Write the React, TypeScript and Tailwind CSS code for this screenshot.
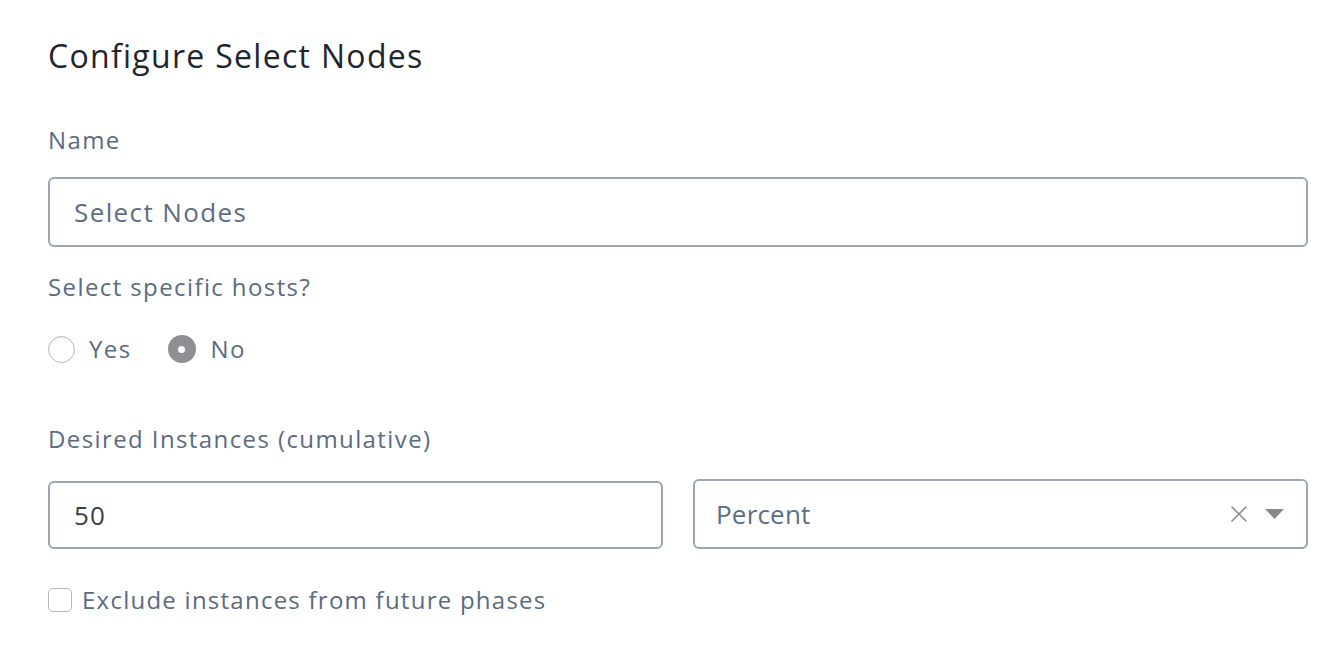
import { X } from "lucide-react";

export default function App() {
  return (
    <div className="min-h-screen bg-white font-['Open_Sans',sans-serif] text-[#5b6b80]">
      <div className="pl-12 pr-[22px] pt-[34px]">
        {/* Header */}
        <h2 className="text-[32px] leading-[44px] tracking-[1.3px] text-[#22262b]">Configure Select Nodes</h2>

        {/* Name */}
        <div className="mt-[46px] text-[24px] leading-8 tracking-[1.4px]">Name</div>
        <div className="mt-[21px] flex h-[70px] items-center rounded-md border-2 border-[#9aa6b6] px-6 text-[26px] tracking-[1.4px] text-[#5d6e83]">
          Select Nodes
        </div>

        {/* Specific hosts */}
        <div className="mt-6 text-[24px] leading-8 tracking-[1.4px]">Select specific hosts?</div>
        <div className="mt-[30px] flex items-center text-[24px] leading-8 tracking-[1.4px]">
          <label className="flex items-center gap-[14px]">
            <span className="h-[27px] w-[27px] rounded-full border border-[#b8b8bc] bg-white shadow-[inset_0_1px_2px_rgba(0,0,0,0.08)]" />
            <span>Yes</span>
          </label>
          <label className="ml-[36px] flex items-center gap-[15px]">
            <span className="flex h-[28px] w-[28px] items-center justify-center rounded-full bg-[#8e8e93]">
              <span className="h-[7px] w-[7px] rounded-full bg-white" />
            </span>
            <span>No</span>
          </label>
        </div>

        {/* Desired instances */}
        <div className="mt-[58px] text-[24px] leading-8 tracking-[1.4px]">Desired Instances (cumulative)</div>
        <div className="mt-[26px] grid grid-cols-2 gap-[30px]">
          <div className="flex h-[68px] items-center rounded-md border-2 border-[#9aa6b6] px-6 text-[26px] tracking-[1.2px] text-[#3a3f46]">
            50
          </div>
          <div className="flex h-[70px] -translate-y-[2px] items-center rounded-md border-2 border-[#9aa6b6] pl-[21px] pr-[22px] text-[26px] tracking-[0.2px] text-[#5d6e83]">
            <span className="flex-1">Percent</span>
            <X className="h-[28px] w-[28px] text-[#8a8a8e]" strokeWidth={1.3} />
            <svg className="ml-[12px]" width="19" height="10" viewBox="0 0 19 10">
              <path d="M0 0 L19 0 L9.5 10 Z" fill="#8a8a8e" />
            </svg>
          </div>
        </div>

        {/* Exclude */}
        <label className="mt-[33px] flex items-center gap-[10px] text-[24px] leading-8 tracking-[1.25px]">
          <span className="h-[24px] w-[24px] rounded-[5px] border border-[#b8b8bc] bg-white" />
          <span>Exclude instances from future phases</span>
        </label>
      </div>
    </div>
  );
}
